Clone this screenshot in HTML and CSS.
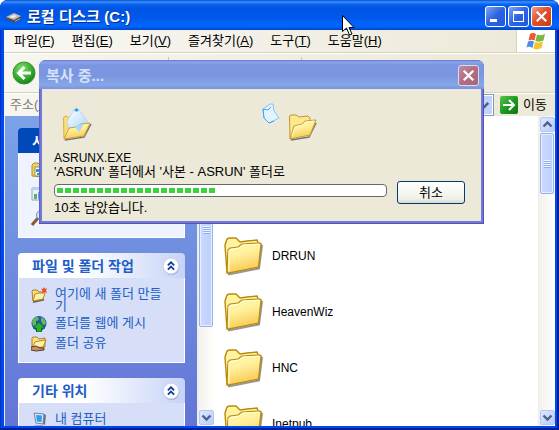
FILE: index.html
```html
<!DOCTYPE html>
<html lang="ko">
<head>
    <meta charset="UTF-8">
    <meta name="viewport" content="width=device-width, initial-scale=1.0">
    <title>로컬 디스크 (C:)</title>
    <link rel="stylesheet" href="styles.css">
</head>
<body>
    <!-- Shared icons -->
    <svg class="defs" aria-hidden="true">
        <defs>
            <linearGradient id="gold" x1="0" y1="0" x2="0.3" y2="1">
                <stop offset="0" stop-color="#fffbb8"/>
                <stop offset="0.5" stop-color="#ffee96"/>
                <stop offset="1" stop-color="#f7cb55"/>
            </linearGradient>
            <linearGradient id="paper" x1="0" y1="0" x2="1" y2="1">
                <stop offset="0" stop-color="#ffffff"/>
                <stop offset="1" stop-color="#9fd4ff"/>
            </linearGradient>
            <radialGradient id="green" cx="0.4" cy="0.3" r="0.75">
                <stop offset="0" stop-color="#7fe06a"/>
                <stop offset="0.6" stop-color="#35ac2c"/>
                <stop offset="1" stop-color="#187a18"/>
            </radialGradient>
            <linearGradient id="go-green" x1="0" y1="0" x2="1" y2="1">
                <stop offset="0" stop-color="#5cc452"/>
                <stop offset="0.5" stop-color="#1f9a24"/>
                <stop offset="1" stop-color="#107416"/>
            </linearGradient>
        </defs>
        <symbol id="folder" viewBox="0 0 40 40">
            <path d="M4 38.500 35 32.500 38 9" fill="none" stroke="#666" stroke-opacity="0.7" stroke-width="2"/>
            <path d="M1 9 3 3 5 2 12 2 16 6 23 5 33 4 34 7 37 8 34 31 3 37Z" fill="#fff3a0" stroke="#b8890b" stroke-width="1.400"/>
            <path d="M4 14 6 12 14 11 18 8 36 7 37 8 34.500 31 4 37 3 35Z" fill="url(#gold)" stroke="#b8890b" stroke-width="1.200"/>
            <path d="M5 35V14L15 12 19 9 35 8" fill="none" stroke="#fffde0"/>
        </symbol>
        <symbol id="double-up" viewBox="0 0 17 17">
            <circle cx="9" cy="9.500" r="7.500" fill="#9aa6cf"/>
            <circle cx="8.500" cy="8.500" r="7.500" fill="#fff" stroke="#c9cfe8"/>
            <path d="M5.500 8 8.500 5 11.500 8M5.500 12 8.500 9 11.500 12" fill="none" stroke="#123b9c" stroke-width="1.600"/>
        </symbol>
        <symbol id="arrow-up" viewBox="0 0 13 13">
            <path d="M2.500 8.500 6.500 4.500 10.500 8.500" fill="none" stroke="#4d6185" stroke-width="2.400"/>
        </symbol>
        <symbol id="arrow-down" viewBox="0 0 13 13">
            <path d="M2.500 4.500 6.500 8.500 10.500 4.500" fill="none" stroke="#4d6185" stroke-width="2.400"/>
        </symbol>
        <symbol id="cross" viewBox="0 0 20 20">
            <path d="M5 5 15 15M15 5 5 15" stroke="#fff" stroke-width="2.400"/>
        </symbol>
    </svg>

    <div class="window">
        <header class="titlebar">
            <svg class="drive-icon" viewBox="0 0 16 16">
                <path d="M0 8 8 5 15 8 15 10 9 14 0 10Z" fill="#4d4d4d"/>
                <path d="M0 8 8 4 15 7 8 11Z" fill="#bcbcbc"/>
                <path d="M3 8 8 6 11 7 7 9Z" fill="#efefef"/>
                <path d="M9 12.500 14 9.500" stroke="#aaa"/>
            </svg>
            <h1>로컬 디스크 (C:)</h1>
            <div class="window-buttons">
                <button type="button" class="caption" aria-label="최소화">
                    <svg viewBox="0 0 19 19"><path d="M4 12h7v3H4z" fill="#fff"/></svg>
                </button>
                <button type="button" class="caption" aria-label="최대화">
                    <svg viewBox="0 0 19 19"><path d="M4 4h11v11H4zM5 7v7h9V7z" fill="#fff" fill-rule="evenodd"/></svg>
                </button>
                <button type="button" class="caption close" aria-label="닫기">
                    <svg viewBox="0 0 20 20"><use href="#cross"/></svg>
                </button>
            </div>
        </header>

        <nav class="menubar">
            <button type="button">파일(<u>F</u>)</button>
            <button type="button">편집(<u>E</u>)</button>
            <button type="button">보기(<u>V</u>)</button>
            <button type="button">즐겨찾기(<u>A</u>)</button>
            <button type="button">도구(<u>T</u>)</button>
            <button type="button">도움말(<u>H</u>)</button>
            <div class="flag">
                <svg viewBox="0 0 20 18">
                    <path d="M4 2Q7 0 10 2L8.500 8.500Q5.500 7 2.500 8.500Z" fill="#ee5a2b"/>
                    <path d="M11 2.500Q15 4 19 2L17.500 8.500Q13 10.500 9.500 9Z" fill="#7cb83c"/>
                    <path d="M2 9.500Q5 8 8 9.500L6.500 16Q3.500 14 .5 15.500Z" fill="#4a8fe6"/>
                    <path d="M9 10Q13 11.500 17 9.500L15.500 16Q11 18.500 7.500 16.500Z" fill="#f8c32c"/>
                </svg>
            </div>
        </nav>

        <div class="toolbar">
            <button type="button" class="back" aria-label="뒤로">
                <svg viewBox="0 0 24 24">
                    <circle cx="12" cy="12" r="11" fill="url(#green)" stroke="#3c8f3a"/>
                    <path d="M19 12H7M12.500 6 6.500 12 12.500 18" fill="none" stroke="#fff" stroke-width="3"/>
                </svg>
            </button>
            <span class="separator"></span>
            <span class="separator"></span>
        </div>

        <form class="addressbar">
            <label for="address">주소(<u>D</u>)</label>
            <div class="combo">
                <input type="text" id="address">
                <button type="button" aria-label="목록"><svg viewBox="0 0 13 13"><use href="#arrow-down"/></svg></button>
            </div>
            <button type="button" class="go">
                <svg viewBox="0 0 18 18">
                    <rect width="18" height="18" rx="2" fill="url(#go-green)"/>
                    <path d="M3 9H14M9 4 14 9 9 14" fill="none" stroke="#fff" stroke-width="2"/>
                </svg>
                이동
            </button>
        </form>

        <div class="content">
            <aside class="tasks">
                <section class="panel primary">
                    <h2>시스템</h2>
                    <ul>
                        <li><a href="#" aria-label="내용 숨기기">
                            <svg viewBox="0 0 16 16">
                                <path d="M1 3 3 1 7 1 9 3 15 3 15 15 1 14Z" fill="#f5cf62" stroke="#b98a1c"/>
                                <rect x="4" y="5" width="11" height="9" fill="#fff" stroke="#8a9a60"/>
                                <path d="M5 7h3v3H5z" fill="#3f8de0"/><path d="M6 11h3v2H6z" fill="#44aa44"/>
                            </svg>
                        </a></li>
                        <li><a href="#" aria-label="프로그램 추가/제거">
                            <svg viewBox="0 0 16 16">
                                <path d="M1 2h12v12H1z" fill="#e8eefa" stroke="#8ba3d6"/>
                                <path d="M1 1h13v3H1z" fill="#c0cdea"/>
                                <path d="M3 8h3v5H3z" fill="#59b455"/><path d="M7 6h4v7H7z" fill="#6d9de8"/>
                            </svg>
                        </a></li>
                        <li><a href="#" aria-label="검색">
                            <svg viewBox="0 0 16 16">
                                <path d="M1 15 7 8" stroke="#8b5a32" stroke-width="3"/>
                                <circle cx="10" cy="5" r="4.500" fill="#c5e7ff" stroke="#7690b8"/>
                            </svg>
                        </a></li>
                    </ul>
                </section>

                <section class="panel">
                    <h2>파일 및 폴더 작업 <svg class="toggle"><use href="#double-up"/></svg></h2>
                    <ul>
                        <li><a href="#">
                            <svg viewBox="0 0 16 16">
                                <path d="M2 15 13 12.500" stroke="#665" stroke-width="2"/>
                                <path d="M1 4 2 3 6 3 8 5 12 5 12 12 2 14Z" fill="#f7df85" stroke="#a98026"/>
                                <path d="M2 14 4 7 8 6 14 6 12 12Z" fill="#fff0a8" stroke="#b98a1c"/>
                                <path d="M13 0 14 2 16 1 15 3.500 16 6 13.500 5 11 6 11.500 3.500 10 1.500 12 2Z" fill="#f04a20"/>
                            </svg>
                            <span>여기에 새 폴더 만들기</span>
                        </a></li>
                        <li><a href="#">
                            <svg viewBox="0 0 16 16">
                                <circle cx="8" cy="7.500" r="7.500" fill="#2457b8"/>
                                <path d="M1 6Q2 1 7 1L8 4 5 5 5 9 2 10ZM10 1Q15 3 15 8L12 9 10 5Z" fill="#62b957"/>
                                <path d="M8 6 14 12H10.500V16H5.500V12H2Z" fill="#2cae36" stroke="#116c22"/>
                            </svg>
                            <span>폴더를 웹에 게시</span>
                        </a></li>
                        <li><a href="#">
                            <svg viewBox="0 0 16 16">
                                <path d="M1 2 2 1 6 1 8 3 14 2 14 11 1 12Z" fill="#f7df85" stroke="#a98026"/>
                                <path d="M1 12 4 6 8 5 15 4 12 11Z" fill="#fff0a8" stroke="#b98a1c"/>
                                <path d="M0 11 5 10 9 12 13 12 13 14 5 15 0 14Z" fill="#c98e62" stroke="#5b3c28"/>
                            </svg>
                            <span>폴더 공유</span>
                        </a></li>
                    </ul>
                </section>

                <section class="panel">
                    <h2>기타 위치 <svg class="toggle"><use href="#double-up"/></svg></h2>
                    <ul>
                        <li><a href="#">
                            <svg viewBox="0 0 16 16">
                                <path d="M3 1 13 2 12 12 5 11Z" fill="#dce8f8" stroke="#7284a8"/>
                                <path d="M5 3 11 3.500 10.500 10 6 9.500Z" fill="#2c9ce8"/>
                                <path d="M4 13 12 13 14 16 2 16Z" fill="#a7adb8"/>
                                <path d="M13 2 15 3 14 13 12 12Z" fill="#6b7690"/>
                            </svg>
                            <span>내 컴퓨터</span>
                        </a></li>
                    </ul>
                </section>
            </aside>
            <div class="scrollbar tasks-scroll">
                <button type="button" aria-label="위로"><svg><use href="#arrow-up"/></svg></button>
                <div class="thumb"></div>
                <button type="button" aria-label="아래로"><svg><use href="#arrow-down"/></svg></button>
            </div>

            <main class="files">
                <ul>
                    <li><svg><use href="#folder"/></svg>DRRUN</li>
                    <li><svg><use href="#folder"/></svg>HeavenWiz</li>
                    <li><svg><use href="#folder"/></svg>HNC</li>
                    <li><svg><use href="#folder"/></svg>Inetpub</li>
                </ul>
            </main>
            <div class="scrollbar files-scroll">
                <button type="button" aria-label="위로"><svg><use href="#arrow-up"/></svg></button>
                <div class="thumb"></div>
                <button type="button" aria-label="아래로"><svg><use href="#arrow-down"/></svg></button>
            </div>
        </div>
    </div>

    <!-- Copy progress dialog -->
    <div class="dialog" role="dialog" aria-labelledby="dialogTitle">
        <header>
            <h2 id="dialogTitle">복사 중...</h2>
            <button type="button" class="caption close" aria-label="닫기">
                <svg viewBox="0 0 20 20"><use href="#cross"/></svg>
            </button>
        </header>
        <div class="dialog-body">
            <div class="copy-animation">
                <svg class="source" viewBox="0 0 30 34">
                    <path d="M3 33 22 30 29 17" fill="none" stroke="#777" stroke-width="1.500"/>
                    <path d="M1.500 11 3 9 6 10 10 14 20 22 22 28 2 32Z" fill="#f9de7a" stroke="#dcae45"/>
                    <path d="M5 14 12 3 17 3 26 15 19 26 7 22Z" fill="url(#paper)" stroke="#b4d8f5"/>
                    <path d="M12 3 14.500 1 17 3 14.500 5Z" fill="#2f9df5"/>
                    <path d="M2 32 7 21 14 20 19 17 28 16 22 29Z" fill="url(#gold)" stroke="#d0a03a"/>
                    <path d="M12 19 22 17 17 25Z" fill="#a5d8fb"/>
                </svg>
                <svg class="sheet" viewBox="0 0 18 21">
                    <path d="M1 6 8 1 11 1 12 8 17 15 7 20 2 15Z" fill="#e4f4ff" stroke="#7cc8fb"/>
                    <path d="M1 6 6 7 9 4M1 6 2 15 7 20 12 18" fill="none" stroke="#3aa6f5"/>
                </svg>
                <svg class="target" viewBox="0 0 30 28">
                    <path d="M3 27 21 24 28 10" fill="none" stroke="#777" stroke-width="1.500"/>
                    <path d="M1.500 3 3 2 8 2 11 4 20 3 22 5 22 20 2 26Z" fill="#fce98e" stroke="#c0962c"/>
                    <path d="M2 26 6 13 14 11 17 8 28 7 22 22Z" fill="url(#gold)" stroke="#c79c30"/>
                    <path d="M4 23 7 14 15 12 18 9 26 8" fill="none" stroke="#fffbd0"/>
                </svg>
            </div>
            <p class="filename">ASRUNX.EXE</p>
            <p>'ASRUN' 폴더에서 '사본 - ASRUN' 폴더로</p>
            <div class="progress-row">
                <progress value="49" max="100" aria-label="복사 진행률"></progress>
                <button type="button" class="cancel">취소</button>
            </div>
            <p class="remaining">10초 남았습니다.</p>
        </div>
    </div>

    <svg class="cursor" viewBox="0 0 13 21" aria-hidden="true">
        <path d="M.5 .5V16.500L4.500 13 7.500 20 10 19 7 12.500H12Z" fill="#fff" stroke="#000"/>
    </svg>
</body>
</html>
```
FILE: styles.css
```css
* {
    box-sizing: border-box;
}

body {
    position: relative;
    height: 100vh;
    margin: 0;
    overflow: hidden;
    background: #fff;
    font: 13px/14px "Liberation Sans", "Noto Sans CJK KR", sans-serif;
    color: #000;
}

h1, h2, p, ul {
    margin: 0;
    padding: 0;
}

ul {
    list-style: none;
}

button {
    margin: 0;
    padding: 0;
    border: 0;
    background: none;
    font: inherit;
    color: inherit;
}

svg {
    display: block;
    flex: none;
}

.defs {
    position: absolute;
    width: 0;
    height: 0;
}

/* Explorer window */
.window {
    display: flex;
    flex-direction: column;
    height: 100%;
    padding: 0 4px 4px;
    border-radius: 8px 8px 0 0;
    background: #0048e8;
    box-shadow: inset -2px -2px 0 #001f9c, inset 1px 0 0 #0030c8;
}

.titlebar {
    display: flex;
    align-items: center;
    flex: none;
    height: 30px;
    margin: 0 -4px;
    padding: 3px 7px 0 6px;
    border-radius: 8px 8px 0 0;
    background: linear-gradient(#0a4ed0 0, #3a92ff 2px, #0a66f0 4px, #0054e3 8px, #0058ea 18px, #0066ff 25px, #0060f8 27px, #0043c4 30px);
}

.titlebar h1 {
    flex: 1;
    margin-left: 5px;
    font-size: 15px;
    line-height: 20px;
    color: #fff;
    text-shadow: 1px 1px 0 #0a2f88;
}

.drive-icon {
    width: 16px;
    height: 16px;
}

.window-buttons {
    display: flex;
    gap: 2px;
}

.caption {
    width: 21px;
    height: 21px;
    border: 1px solid #fff;
    border-radius: 3px;
    background: linear-gradient(135deg, #7fa5f5, #2d62e4 50%, #2458dc);
}

.caption svg {
    width: 19px;
    height: 19px;
}

.close {
    background: linear-gradient(135deg, #f0a088, #e0502c 45%, #cc3c14);
}

.menubar {
    display: flex;
    align-items: center;
    flex: none;
    gap: 17px;
    height: 23px;
    padding-left: 10px;
    border-bottom: 1px solid #d8d2bd;
    background: linear-gradient(90deg, #f8f7f3, #ece9d8);
}

.flag {
    display: flex;
    align-items: center;
    justify-content: center;
    width: 39px;
    height: 22px;
    margin-left: auto;
    border-left: 1px solid #d8d2bd;
    background: #fff;
}

.flag svg {
    width: 20px;
    height: 18px;
}

.toolbar {
    display: flex;
    align-items: center;
    flex: none;
    gap: 132px;
    height: 40px;
    padding-left: 8px;
    border-top: 1px solid #fff;
    border-bottom: 1px solid #d8d2bd;
    background: linear-gradient(90deg, #f6f5ef, #ece9d8);
}

.back svg {
    width: 24px;
    height: 24px;
}

.separator {
    width: 1px;
    height: 32px;
    background: #c9c5b2;
}

.addressbar {
    display: flex;
    align-items: center;
    flex: none;
    gap: 6px;
    height: 23px;
    padding: 0 8px 0 6px;
    border-top: 1px solid #fff;
    background: linear-gradient(90deg, #f6f5ef, #ece9d8);
}

.addressbar label {
    color: #7c7a70;
}

.combo {
    display: flex;
    flex: 1;
    height: 22px;
    padding: 1px;
    border: 1px solid #7f9db9;
    background: #fff;
}

.combo input {
    flex: 1;
    min-width: 0;
    border: 0;
}

.combo button {
    width: 16px;
    padding: 0 1px;
    background: #c3d3fd;
}

.go {
    display: flex;
    align-items: center;
    gap: 5px;
}

.go svg {
    width: 18px;
    height: 18px;
}

.content {
    display: flex;
    flex: 1;
    min-height: 0;
    background: #fff;
}

/* Task pane */
.tasks {
    display: flex;
    flex-direction: column;
    gap: 15px;
    flex: none;
    width: 193px;
    padding: 12px 12px 0 13px;
    overflow: hidden;
    border-left: 1px solid #e4eafc;
    background: linear-gradient(#7ba2e7, #6375d6);
}

.panel {
    flex: none;
    color: #215dc6;
}

.panel h2 {
    display: flex;
    align-items: center;
    justify-content: space-between;
    height: 25px;
    padding: 0 5px 0 14px;
    border-radius: 4px 4px 0 0;
    background: linear-gradient(90deg, #fff 40%, #c6d3f7);
    font-size: 14px;
    line-height: 20px;
}

.panel .toggle {
    width: 18px;
    height: 18px;
}

.panel ul {
    display: flex;
    flex-direction: column;
    gap: 4px;
    min-height: 85px;
    padding: 9px 16px 10px 12px;
    border: 1px solid #fff;
    border-top: 0;
    background: #d6dff7;
}

.panel a {
    display: flex;
    gap: 8px;
    color: inherit;
    line-height: 12px;
    text-decoration: none;
    word-break: break-all;
}

.panel a svg {
    width: 16px;
    height: 16px;
}

.panel a span {
    padding-top: 1px;
}

.primary h2 {
    background: #0049b8;
    color: #fff;
}

.primary ul {
    gap: 8px;
    background: #eff3ff;
}

/* Scrollbars */
.scrollbar {
    display: flex;
    flex-direction: column;
    flex: none;
    width: 17px;
    padding: 1px;
    border-left: 1px solid #eeede5;
    background: linear-gradient(90deg, #f3f1ec, #fefefb);
}

.scrollbar button {
    width: 15px;
    height: 15px;
    border: 1px solid #b4c8f6;
    border-radius: 2px;
    background: linear-gradient(135deg, #dce7ff, #b9cdfb);
}

.scrollbar button svg {
    width: 13px;
    height: 13px;
}

.scrollbar button:last-child {
    margin-top: auto;
}

.thumb {
    display: flex;
    align-items: center;
    justify-content: center;
    height: 61px;
    margin-top: 1px;
    border: 1px solid #98b0e4;
    border-radius: 2px;
    background: linear-gradient(90deg, #cbdafe, #bccffc);
    box-shadow: inset 0 0 0 1px #e6eeff;
}

.thumb::before {
    content: "";
    width: 7px;
    height: 8px;
    background: repeating-linear-gradient(#eef4ff 0, #eef4ff 1px, #8cb0f8 1px, #8cb0f8 2px);
}

.tasks-scroll .thumb {
    height: 63%;
}

/* File list */
.files {
    flex: 1;
    overflow: hidden;
    padding: 112px 0 0 10px;
}

.files li {
    display: flex;
    align-items: center;
    gap: 8px;
    height: 56px;
    font-size: 12px;
}

.files svg {
    width: 40px;
    height: 40px;
}

/* Copy dialog */
.dialog {
    position: absolute;
    top: 60px;
    left: 39px;
    width: 445px;
    padding: 0 3px 3px;
    border-radius: 7px 7px 0 0;
    background: #7178d8;
    box-shadow: inset -1px -1px 0 #5054b8, inset 1px 0 0 #6064c8;
}

.dialog header {
    display: flex;
    align-items: center;
    justify-content: space-between;
    height: 29px;
    margin: 0 -3px;
    padding: 2px 5px 0 7px;
    border-radius: 7px 7px 0 0;
    background: linear-gradient(#6a72d0 0, #8ca6ec 2px, #7b95e0 5px, #7b96e1 16px, #85a8e9 25px, #7c90dc 29px);
}

.dialog h2 {
    font-size: 15px;
    line-height: 20px;
    color: #d5e1fa;
}

.dialog .caption {
    border-color: #d8dcf4;
    background: linear-gradient(135deg, #c08ca0, #b46c80 50%, #a8657c);
}

.dialog-body {
    padding: 14px 16px 6px 12px;
    background: #ece9d8;
}

.copy-animation {
    display: flex;
    align-items: flex-end;
    height: 38px;
    margin-bottom: 10px;
    padding-left: 8px;
}

.source {
    width: 30px;
    height: 34px;
}

.sheet {
    align-self: flex-start;
    width: 18px;
    height: 21px;
    margin-left: 170px;
}

.target {
    width: 30px;
    height: 28px;
    margin-left: 8px;
}

.filename {
    font-size: 12px;
}

.progress-row {
    display: flex;
    align-items: center;
    gap: 10px;
    height: 23px;
    margin-top: 2px;
}

progress {
    flex: 1;
    align-self: flex-start;
    height: 13px;
    margin-top: 3px;
    padding: 2px;
    border: 1px solid #686868;
    border-radius: 4px;
    background: #fff;
    appearance: none;
}

progress::-webkit-progress-bar {
    background: #fff;
}

progress::-webkit-progress-value {
    border: solid #fff;
    border-width: 1px 0;
    background: repeating-linear-gradient(90deg, #3cd23c 0, #3cd23c 6px, #fff 6px, #fff 8px);
}

.cancel {
    width: 68px;
    height: 23px;
    border: 1px solid #003c74;
    border-radius: 3px;
    background: linear-gradient(#fff, #f0f0ea 80%, #dcd8cc);
}

.remaining {
    margin-top: -3px;
}

.cursor {
    position: absolute;
    top: 15px;
    left: 342px;
    width: 13px;
    height: 21px;
}
```
